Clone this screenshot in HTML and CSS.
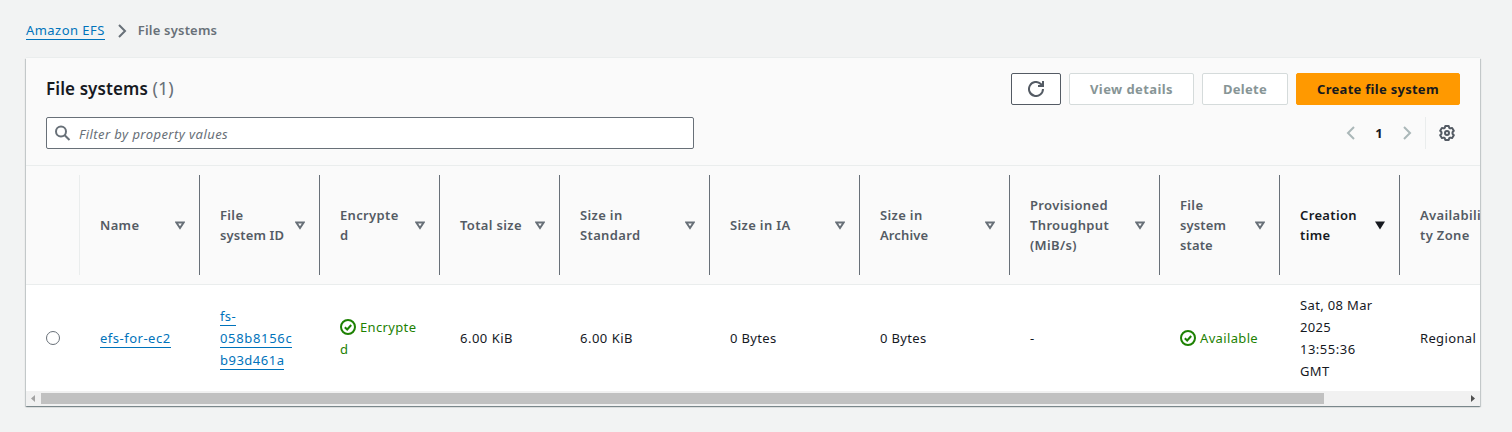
FILE: index.html
```html
<!DOCTYPE html>
<html lang="en">
<head>
<meta charset="utf-8">
<title>File systems - Amazon EFS</title>
<link rel="stylesheet" href="styles.css">
</head>
<body>
<svg class="defs" width="0" height="0" aria-hidden="true">
  <symbol id="sort" viewBox="0 0 10 9"><path d="M1.300 1.500h7.400L5 7z" fill="none" stroke="currentColor" stroke-width="2"/></symbol>
  <symbol id="check" viewBox="0 0 16 16"><circle cx="8" cy="8" r="7" fill="none" stroke="currentColor" stroke-width="2"/><path d="M4.8 8.2l2.4 2.3 4-4.5" fill="none" stroke="currentColor" stroke-width="2"/></symbol>
</svg>
<nav class="breadcrumb">
  <a class="link crumb-link" href="#">Amazon EFS</a>
  <svg class="crumb-arrow" width="10" height="14" viewBox="0 0 10 14"><path d="M2 1l6 6-6 6" fill="none" stroke="currentColor" stroke-width="2"/></svg>
  <span class="crumb-current">File systems</span>
</nav>
<main class="card">
  <header class="head">
    <div class="title-row">
      <h1 class="title">File systems <span class="count">(1)</span></h1>
      <div class="actions">
        <button class="btn btn-refresh" aria-label="Refresh"><svg width="16" height="16" viewBox="0 0 16 16" fill="none" stroke="currentColor" stroke-width="2"><path d="M15 8a7 7 0 1 1-2.2-5.1L15 5"/><path d="M15 0v5h-5"/></svg></button>
        <button class="btn btn-view">View details</button>
        <button class="btn btn-delete">Delete</button>
        <button class="btn btn-create">Create file system</button>
      </div>
    </div>
    <div class="filter-row">
      <div class="filter">
        <svg width="16" height="16" viewBox="0 0 16 16" fill="none" stroke="currentColor" stroke-width="2"><circle cx="6" cy="6.500" r="5"/><path d="M9.700 10.200L14.500 15"/></svg>
        <span class="placeholder">Filter by property values</span>
      </div>
      <div class="pager">
        <svg class="page-arrow" width="10" height="14" viewBox="0 0 10 14"><path d="M8 1L2 7l6 6" fill="none" stroke="currentColor" stroke-width="2"/></svg>
        <span class="page">1</span>
        <svg class="page-arrow" width="10" height="14" viewBox="0 0 10 14"><path d="M2 1l6 6-6 6" fill="none" stroke="currentColor" stroke-width="2"/></svg>
        <div class="settings"><svg width="16" height="16" viewBox="0 0 16 16" fill="none" stroke="currentColor" stroke-width="2" stroke-linejoin="round"><path d="M6.300 1h3.400l.5 1.800 1 .6 1.900-.5 1.700 2.900L13.500 7.200v1.600l1.300 1.400-1.700 2.900-1.900-.5-1 .6-.5 1.800H6.300l-.5-1.800-1-.6-1.900.5-1.700-2.900L2.500 8.800V7.200L1.200 5.800l1.700-2.900 1.900.5 1-.6z"/><circle cx="8" cy="8" r="2"/></svg></div>
      </div>
    </div>
  </header>
  <div class="grid grid-head">
    <div class="th th-select"></div>
    <div class="th"><span>Name</span><svg class="sort"><use href="#sort"/></svg></div>
    <div class="th"><span>File<br><span class="tight">system ID</span></span><svg class="sort"><use href="#sort"/></svg></div>
    <div class="th"><span>Encrypte<br>d</span><svg class="sort"><use href="#sort"/></svg></div>
    <div class="th"><span>Total size</span><svg class="sort"><use href="#sort"/></svg></div>
    <div class="th"><span>Size in<br>Standard</span><svg class="sort"><use href="#sort"/></svg></div>
    <div class="th"><span>Size in IA</span><svg class="sort"><use href="#sort"/></svg></div>
    <div class="th"><span>Size in<br><span class="tight">Archive</span></span><svg class="sort"><use href="#sort"/></svg></div>
    <div class="th"><span>Provisioned<br>Throughput<br>(MiB/s)</span><svg class="sort"><use href="#sort"/></svg></div>
    <div class="th"><span>File<br><span class="tight">system</span><br><span class="tight">state</span></span><svg class="sort"><use href="#sort"/></svg></div>
    <div class="th th-sorted"><span>Creation<br>time</span><svg class="sort" viewBox="0 0 10 9"><path d="M0 .5h10L5 8.500z" fill="currentColor"/></svg></div>
    <div class="th th-last"><span>Availabili<br>ty Zone</span></div>
  </div>
  <div class="grid grid-row">
    <div class="td td-select"><span class="radio"></span></div>
    <div class="td"><span><a class="link wide" href="#">efs-for-ec2</a></span></div>
    <div class="td"><span><a class="link" href="#">fs-<br><span class="widest">058b8156c</span><br><span class="wide">b93d461a</span></a></span></div>
    <div class="td ok"><span><svg class="status"><use href="#check"/></svg>Encrypte<br>d</span></div>
    <div class="td wide"><span>6.00 KiB</span></div>
    <div class="td wide"><span>6.00 KiB</span></div>
    <div class="td"><span>0 Bytes</span></div>
    <div class="td"><span>0 Bytes</span></div>
    <div class="td"><span>-</span></div>
    <div class="td ok"><span><svg class="status"><use href="#check"/></svg>Available</span></div>
    <div class="td"><span>Sat, 08 Mar<br>2025<br><span class="wide">13:55:36</span><br>GMT</span></div>
    <div class="td"><span>Regional</span></div>
  </div>
  <div class="scrollbar">
    <svg class="sb-arrow sb-left" width="15" height="15" viewBox="0 0 15 15"><path d="M9 4v7L5 7.500z" fill="currentColor"/></svg>
    <div class="thumb"></div>
    <svg class="sb-arrow" width="15" height="15" viewBox="0 0 15 15"><path d="M6 4v7l4-3.500z" fill="currentColor"/></svg>
  </div>
</main>
</body>
</html>
```
FILE: styles.css
```css
* { box-sizing: border-box; }
body {
  margin: 0;
  height: 432px;
  overflow: hidden;
  background: #f2f3f3;
  color: #16191f;
  font: 13px/22px "Noto Sans", "Open Sans", sans-serif;
}
.defs { position: absolute; }
svg { flex: none; display: block; }
.link {
  color: #0073bb;
  text-decoration: none;
  border-bottom: 1px solid #0073bb;
}
.breadcrumb {
  display: flex;
  align-items: center;
  height: 58px;
  padding: 3px 26px 0;
  color: #687078;
}
.crumb-link { line-height: 18px; letter-spacing: .45px; }
.crumb-arrow { margin: 0 11px 0 12px; }
.crumb-current { padding-bottom: 2px; font-weight: 600; letter-spacing: .2px; }
.card {
  width: 1454px;
  height: 348px;
  margin-left: 26px;
  background: #fff;
  box-shadow: 0 1px 1px 0 rgba(0, 28, 36, .3), 1px 1px 1px 0 rgba(0, 28, 36, .15), -1px 1px 1px 0 rgba(0, 28, 36, .15), 0 -1px 0 #eaeded;
  overflow: hidden;
}
.head {
  height: 108px;
  padding: 15px 20px 0;
  background: #fafafa;
  border-bottom: 1px solid #eaeded;
}
.title-row, .filter-row { display: flex; justify-content: space-between; }
.title { height: 32px; margin: 0; font-size: 17px; line-height: 30px; font-weight: 600; letter-spacing: .1px; }
.count { font-size: 18px; font-weight: 400; letter-spacing: 0; color: #687078; }
.actions { display: flex; gap: 8px; }
.btn {
  display: flex;
  align-items: center;
  justify-content: center;
  height: 32px;
  padding: 0;
  border: 1px solid #d5dbdb;
  border-radius: 2px;
  background: #fff;
  color: #879596;
  font: 700 13px/20px "Noto Sans", "Open Sans", sans-serif;
  letter-spacing: .28px;
}
.btn-refresh { width: 50px; border-color: #545b64; color: #545b64; }
.btn-view { width: 125px; letter-spacing: .42px; }
.btn-delete { width: 86px; }
.btn-create { width: 164px; background: #f90; border-color: #f90; color: #16191f; }
.filter-row { margin-top: 12px; }
.filter {
  display: flex;
  align-items: center;
  gap: 8px;
  width: 648px;
  height: 32px;
  padding-left: 8px;
  border: 1px solid #687078;
  border-radius: 2px;
  background: #fff;
  color: #687078;
}
.placeholder { padding-top: 2px; font-style: italic; letter-spacing: .44px; }
.pager { display: flex; align-items: center; height: 32px; }
.page-arrow { color: #aab7b8; }
.page { width: 46px; text-align: center; font-weight: 700; }
.settings {
  display: flex;
  align-items: center;
  height: 32px;
  margin-left: 13px;
  padding: 0 5px 0 13px;
  border-left: 1px solid #eaeded;
  color: #545b64;
}
.grid {
  display: grid;
  grid-template-columns: 54px repeat(4, 120px) repeat(3, 150px) 150px 120px 120px 120px;
}
.grid-head {
  height: 119px;
  padding: 9px 0;
  background: #fafafa;
  border-bottom: 1px solid #eaeded;
}
.th {
  display: flex;
  align-items: center;
  justify-content: space-between;
  padding: 0 14px 0 20px;
  border-right: 1px solid #687078;
  color: #545b64;
  font-weight: 600;
  line-height: 20px;
  letter-spacing: .35px;
  white-space: nowrap;
}
.th-select { border-right-color: #eaeded; }
.th-sorted { color: #16191f; }
.th-last { border: 0; }
.tight { letter-spacing: .12px; }
.sort { width: 10px; height: 9px; color: #687078; }
.th-sorted .sort { color: #16191f; }
.grid-row { height: 106px; }
.td { display: flex; align-items: center; padding-left: 20px; letter-spacing: .35px; white-space: nowrap; }
.wide { letter-spacing: .5px; }
.widest { letter-spacing: .67px; }
.ok { color: #1d8102; }
.status { display: inline-block; width: 16px; height: 16px; margin-right: 4px; vertical-align: -3px; }
.radio { width: 14px; height: 14px; border: 1px solid #687078; border-radius: 50%; }
.scrollbar { display: flex; height: 15px; background: #f1f1f1; color: #505050; }
.sb-left { color: #a3a3a3; }
.thumb { width: 1283px; height: 11px; margin: 2px 141px 0 0; background: #c1c1c1; }
```
